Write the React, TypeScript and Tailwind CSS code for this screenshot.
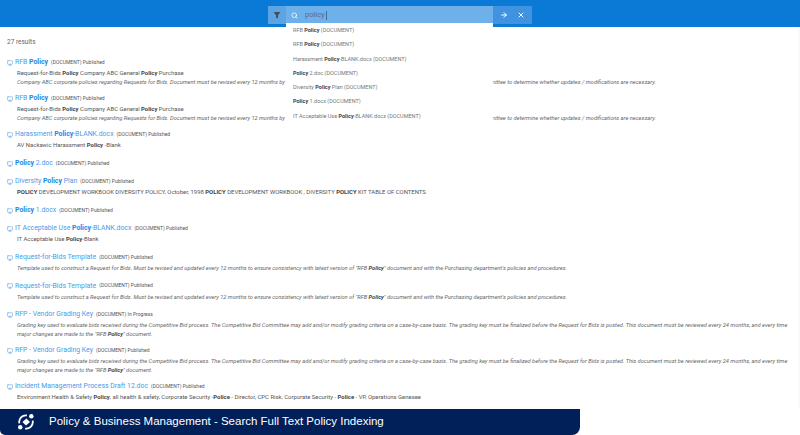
import { ArrowRight, Monitor, Search, X } from 'lucide-react';
import { ReactNode } from 'react';

const P = ({ children = 'Policy' }: { children?: ReactNode }) => <b className="font-bold text-[#444]">{children}</b>;
const T = ({ children = 'Policy' }: { children?: ReactNode }) => <b className="font-bold text-[#1e88e5]">{children}</b>;

const rfbDesc =
  'Company ABC corporate policies regarding Requests for Bids. Document must be revised every 12 months by the Purchasing department and then reviewed annually by the Competitive Bid Committee to determine whether updates / modifications are necessary.';
const rfbSub = (
  <>
    Request-for-Bids <P /> Company ABC General <P /> Purchase
  </>
);
const templateDesc = (
  <>
    Template used to construct a Request for Bids. Must be revised and updated every 12 months to ensure consistency with latest version of "RFB <P />" document and with the Purchasing department's policies and procedures.
  </>
);
const gradingDesc = (
  <>
    Grading key used to evaluate bids received during the Competitive Bid process. The Competitive Bid Committee may add and/or modify grading criteria on a case-by-case basis. The grading key must be finalized before the Request for Bids is posted. This document must be reviewed every 24 months, and every time major changes are made to the "RFB <P />" document.
  </>
);

type Result = { title: ReactNode; status: string; sub?: ReactNode; desc?: ReactNode };

const results: Result[] = [
  { title: <>RFB <T /></>, status: 'Published', sub: rfbSub, desc: rfbDesc },
  { title: <>RFB <T /></>, status: 'Published', sub: rfbSub, desc: rfbDesc },
  { title: <>Harassment <T />-BLANK.docx</>, status: 'Published', sub: <>AV Nackawic Harassment <P /> -Blank</> },
  { title: <><T /> 2.doc</>, status: 'Published' },
  {
    title: <>Diversity <T /> Plan</>,
    status: 'Published',
    sub: <><P>POLICY</P> DEVELOPMENT WORKBOOK DIVERSITY POLICY, October, 1998 <P>POLICY</P> DEVELOPMENT WORKBOOK , DIVERSITY <P>POLICY</P> KIT TABLE OF CONTENTS</>,
  },
  { title: <><T /> 1.docx</>, status: 'Published' },
  { title: <>IT Acceptable Use <T />-BLANK.docx</>, status: 'Published', sub: <>IT Acceptable Use <P />-Blank</> },
  { title: 'Request-for-Bids Template', status: 'Published', desc: templateDesc },
  { title: 'Request-for-Bids Template', status: 'Published', desc: templateDesc },
  { title: 'RFP - Vendor Grading Key', status: 'In Progress', desc: gradingDesc },
  { title: 'RFP - Vendor Grading Key', status: 'Published', desc: gradingDesc },
  {
    title: 'Incident Management Process Draft 12.doc',
    status: 'Published',
    sub: <>Environment Health &amp; Safety <P />, all health &amp; safety, Corporate Security -<P>Police</P> - Director, CPC Risk, Corporate Security - <P>Police</P> - VP, Operations Genesee</>,
  },
];

const suggestions: ReactNode[] = [
  <>RFB <P /> (DOCUMENT)</>,
  <>RFB <P /> (DOCUMENT)</>,
  <>Harassment <P />-BLANK.docx (DOCUMENT)</>,
  <><P /> 2.doc (DOCUMENT)</>,
  <>Diversity <P /> Plan (DOCUMENT)</>,
  <><P /> 1.docx (DOCUMENT)</>,
  <>IT Acceptable Use <P />-BLANK.docx (DOCUMENT)</>,
];

function ResultRow({ result }: { result: Result }) {
  return (
    <div className="pb-[7px]">
      <div className="flex h-[11px] items-center">
        <Monitor size={6} strokeWidth={2} className="mr-[2px] text-[#4a9be8]" />
        <span className="whitespace-nowrap text-[6.9px] text-[#4a9be8]">{result.title}</span>
        <span className="ml-[3px] whitespace-nowrap text-[5px] text-[#555]">(DOCUMENT) {result.status}</span>
      </div>
      {result.sub && <div className="h-[11px] whitespace-nowrap pl-[10px] text-[5.93px] leading-[10px] text-[#555]">{result.sub}</div>}
      {result.desc && (
        <div className={`${result.sub ? 'leading-[7px]' : 'min-h-[10.5px] pt-px leading-[8.5px]'} whitespace-normal pl-[10px] text-[5.7px] italic text-[#666]`}>{result.desc}</div>
      )}
    </div>
  );
}

export default function App() {
  return (
    <div className="relative flex h-[435px] w-[800px] flex-col overflow-hidden bg-white font-['Roboto',sans-serif]">
      {/* header */}
      <div className="flex h-[27px] shrink-0 justify-center bg-[#0a7ad6] pt-[6px]">
        <div className="flex h-[18px] w-[264px] rounded-[1px] bg-[#3f93e0]">
          <div className="flex w-[18px] items-center justify-center bg-[#5da4e4]">
            <svg width="8" height="8" viewBox="0 0 8 8" fill="#444f5e">
              <path d="M0.5 1h7L5 4.2V7.5L3 6.5V4.2z" />
            </svg>
          </div>
          <div className="relative flex w-[207px] items-center bg-[#6db0ea]">
            <Search size={7} strokeWidth={2.5} className="ml-[5px] text-white" />
            <span className="ml-[7px] text-[7.5px] text-[#5d6b80]">policy</span>
            <span className="ml-px h-[9px] w-px bg-[#4a6a90]" />
            {/* suggestion dropdown */}
            <div className="absolute left-0 top-[17px] z-10 w-[207px] bg-white pb-[3px]">
              {suggestions.map((item, i) => (
                <div key={i} className="h-[14.3px] whitespace-nowrap pl-[7px] text-[5.5px] leading-[14.3px] text-[#777]">
                  {item}
                </div>
              ))}
            </div>
          </div>
          <div className="flex flex-1 items-center justify-around px-[2px]">
            <ArrowRight size={8} strokeWidth={3} className="text-white" />
            <X size={8} strokeWidth={3} className="text-white" />
          </div>
        </div>
      </div>

      {/* results */}
      <div className="min-h-0 flex-1 border-r-2 border-[#f7f9fb] pl-[7px] pr-[6px]">
        <div className="mb-[10px] mt-[11px] h-[9px] text-[6.5px] leading-[9px] text-[#666]">27 results</div>
        {results.map((result, i) => (
          <ResultRow key={i} result={result} />
        ))}
      </div>

      {/* caption */}
      <div className="flex h-[26px] w-[580px] shrink-0 items-center rounded-bl-[5px] rounded-br-[8px] bg-[#01205a] pl-[18px]">
        <svg width="16" height="16" viewBox="0 0 18 18" fill="white">
          <circle cx="15" cy="2.5" r="2.5" />
          <circle cx="2.5" cy="15" r="2.5" />
          <path d="M9.5 5 13.5 9 9 13 5 9z" />
          <path d="M1.5 10.5A7.5 7.5 0 0 1 10 1.6" fill="none" stroke="white" strokeWidth="2" />
          <path d="M16.5 7.5A7.5 7.5 0 0 1 8 16.4" fill="none" stroke="white" strokeWidth="2" />
        </svg>
        <span className="ml-[15px] whitespace-nowrap font-['Liberation_Sans',sans-serif] text-[11.5px] text-white">
          Policy &amp; Business Management - Search Full Text Policy Indexing
        </span>
      </div>
    </div>
  );
}
